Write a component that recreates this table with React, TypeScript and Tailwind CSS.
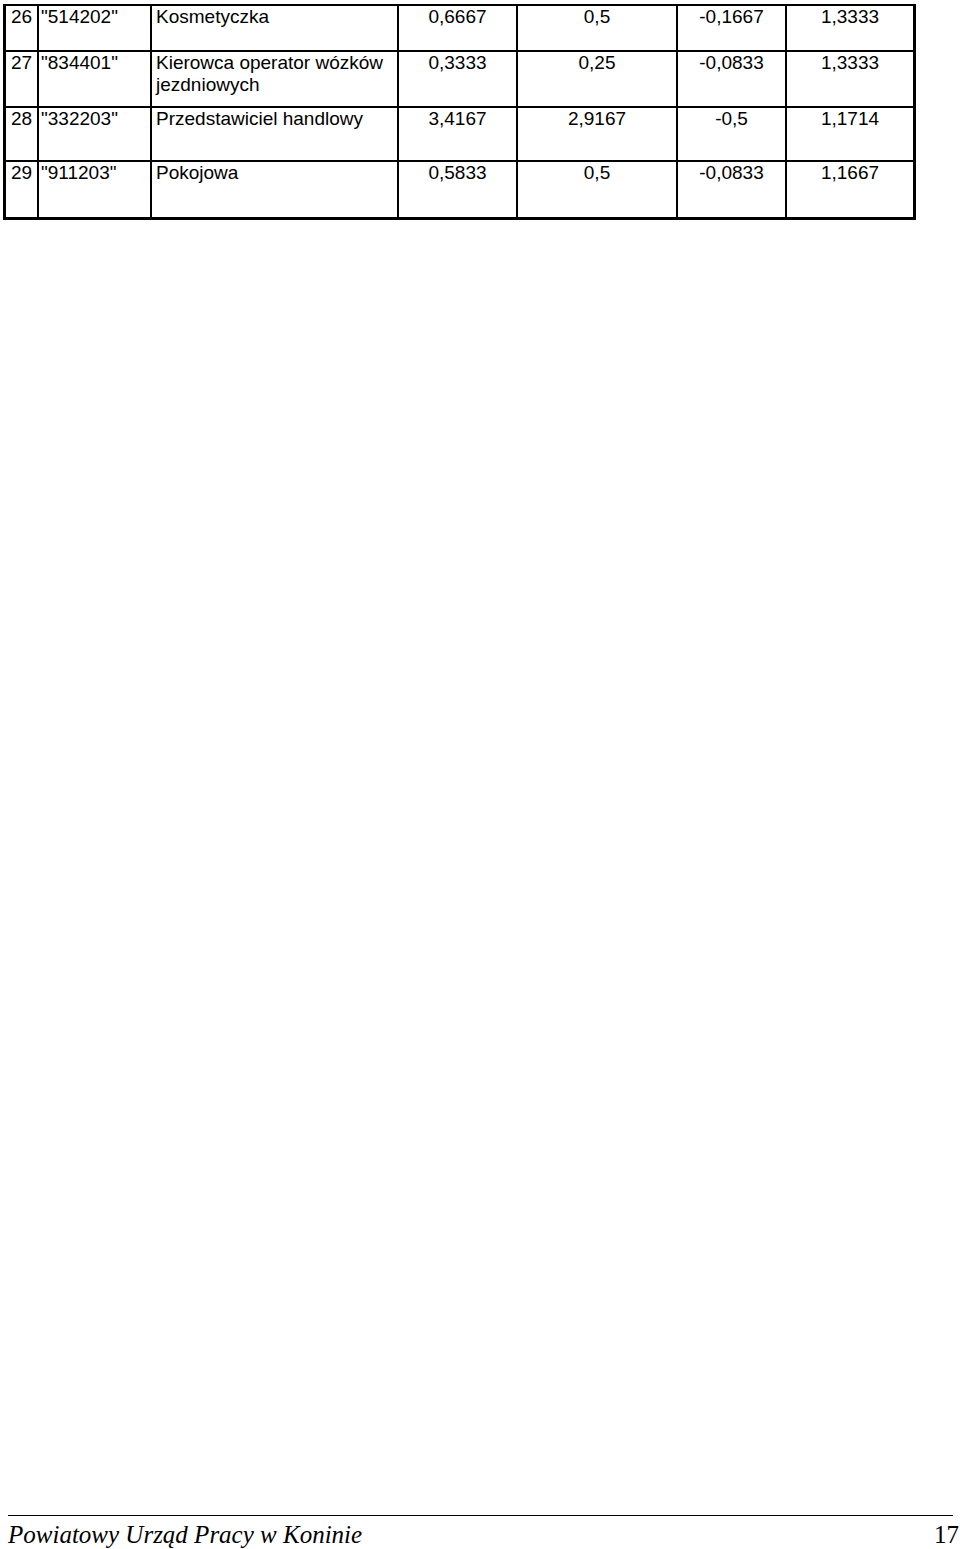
const rows = [
  { h: "h-[46px]", lp: "26", code: '"514202"', name: "Kosmetyczka", a: "0,6667", b: "0,5", c: "-0,1667", d: "1,3333" },
  { h: "h-[56px]", lp: "27", code: '"834401"', name: "Kierowca operator wózków jezdniowych", a: "0,3333", b: "0,25", c: "-0,0833", d: "1,3333" },
  { h: "h-[54px]", lp: "28", code: '"332203"', name: "Przedstawiciel handlowy", a: "3,4167", b: "2,9167", c: "-0,5", d: "1,1714" },
  { h: "h-[55px]", lp: "29", code: '"911203"', name: "Pokojowa", a: "0,5833", b: "0,5", c: "-0,0833", d: "1,1667" },
];

export default function App() {
  return (
    <div className="flex h-[1549px] flex-col bg-white text-black">
      <div
        className="ml-[3px] mt-[4px] w-[913px] border-x-[3px] border-b-[3px] border-t-2 border-black text-[19px] leading-[22px]"
        style={{ fontFamily: '"Liberation Sans", Arial, sans-serif' }}
      >
        {rows.map((r, i) => (
          <div
            key={r.lp}
            className={`grid grid-cols-[33px_113px_247px_119px_160px_109px_126px] ${r.h} ${
              i < rows.length - 1 ? "border-b-2 border-black" : ""
            }`}
          >
            <div className="border-r-2 border-black text-center">{r.lp}</div>
            <div className="border-r-2 border-black pl-[2px]">{r.code}</div>
            <div className="border-r-2 border-black pl-[4px]">{r.name}</div>
            <div className="border-r-2 border-black text-center">{r.a}</div>
            <div className="border-r-2 border-black text-center">{r.b}</div>
            <div className="border-r-2 border-black text-center">{r.c}</div>
            <div className="text-center">{r.d}</div>
          </div>
        ))}
      </div>

      <div className="mt-auto" style={{ fontFamily: '"Liberation Serif", "Times New Roman", serif' }}>
        <div className="ml-[8px] w-[945px] border-t border-black" />
        <div className="flex w-[959px] justify-between pl-[8px] pt-[5px] text-[25px] leading-[28px]">
          <span className="italic">Powiatowy Urząd Pracy w Koninie</span>
          <span>17</span>
        </div>
      </div>
    </div>
  );
}
